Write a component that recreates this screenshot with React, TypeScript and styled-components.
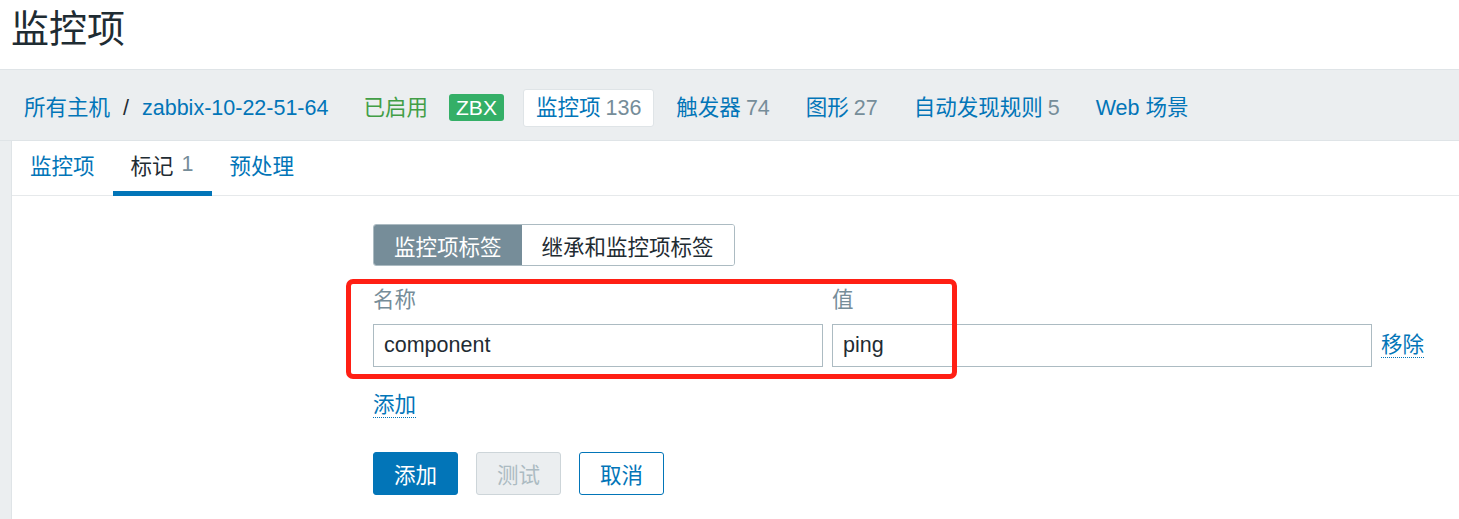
import React from "react";
import styled, { createGlobalStyle } from "styled-components";

const FONT = `"Liberation Sans", Arial, "Noto Sans CJK SC", sans-serif`;
const BLUE = "#0275b8";
const DARK = "#1f2c33";
const GREY = "#768d99";

const Global = createGlobalStyle`
  html, body, #root { height: 100%; }
  body {
    margin: 0;
    background: #ebeef0;
    font-family: ${FONT};
    font-size: 21.5px;
    color: ${DARK};
    overflow: hidden;
  }
  * { box-sizing: border-box; }
`;

const Page = styled.div`
  display: flex;
  flex-direction: column;
  height: 100vh;
`;

const Header = styled.header`
  height: 69px;
  background: #fff;
  padding: 0 11px;
`;

const Title = styled.h1`
  margin: 0;
  font-size: 38px;
  font-weight: normal;
  line-height: 59px;
  color: ${DARK};
`;

const Band = styled.nav`
  display: flex;
  align-items: center;
  height: 72px;
  padding: 18px 0 13px 24px;
  border-top: 1px solid #dfe4e7;
  border-bottom: 1px solid #dfe4e7;
  background: #ebeef0;
  line-height: 26px;
`;

const Crumb = styled.a`
  color: ${BLUE};
  text-decoration: none;
  white-space: nowrap;
`;

const Sep = styled.span`
  margin: 0 13px;
  color: ${DARK};
`;

const Status = styled.span`
  margin-left: 35px;
  color: #429e47;
`;

const Badge = styled.span`
  margin-left: 21px;
  height: 27px;
  width: 55px;
  display: inline-flex;
  align-items: center;
  justify-content: center;
  background: #34af67;
  color: #fff;
  border-radius: 3px;
  font-size: 21px;
`;

const NavItem = styled.a<{ $active?: boolean; $ml: number }>`
  display: inline-flex;
  align-items: center;
  height: 38px;
  padding: 0 12px;
  margin-left: ${(p) => p.$ml}px;
  color: ${BLUE};
  text-decoration: none;
  white-space: nowrap;
  border-radius: 3px;
  border: 1px solid ${(p) => (p.$active ? "#dfe4e7" : "transparent")};
  background: ${(p) => (p.$active ? "#fff" : "transparent")};
`;

const Count = styled.span<{ $gap?: number }>`
  color: ${GREY};
  margin-left: ${(p) => p.$gap ?? 5}px;
`;

const Panel = styled.main`
  flex: 1;
  margin-left: 11px;
  border-left: 1px solid #dfe4e7;
  background: #fff;
`;

const TabList = styled.div`
  display: flex;
  height: 55px;
  border-bottom: 1px solid #e6e9eb;
`;

const Tab = styled.a<{ $active?: boolean }>`
  display: flex;
  align-items: center;
  padding: 0 18px 3px;
  margin-bottom: -1px;
  color: ${(p) => (p.$active ? DARK : BLUE)};
  text-decoration: none;
  border-bottom: 5px solid ${(p) => (p.$active ? BLUE : "transparent")};
  white-space: nowrap;
`;

const Form = styled.div`
  margin-left: 361px;
  padding-top: 28px;
`;

const Toggle = styled.div`
  display: inline-flex;
  height: 42px;
  border: 1px solid #acbbc2;
  border-radius: 3px;
  overflow: hidden;
`;

const ToggleBtn = styled.span<{ $on?: boolean }>`
  display: flex;
  align-items: center;
  padding: 0 20px;
  background: ${(p) => (p.$on ? GREY : "#fff")};
  color: ${(p) => (p.$on ? "#fff" : DARK)};
  white-space: nowrap;
`;

const TagTable = styled.div`
  position: relative;
  display: grid;
  grid-template-columns: 450px 540px auto;
  column-gap: 9px;
  row-gap: 10px;
  margin-top: 20px;
  align-items: center;
`;

const ColLabel = styled.span`
  line-height: 28px;
  color: ${GREY};
`;

const Input = styled.div`
  height: 43px;
  display: flex;
  align-items: center;
  padding: 0 10px;
  border: 1px solid #acbbc2;
  background: #fff;
  color: ${DARK};
`;

const ActionLink = styled.a`
  justify-self: start;
  color: ${BLUE};
  text-decoration: none;
  line-height: 24px;
  border-bottom: 1px dotted ${BLUE};
`;

const AddLink = styled(ActionLink)`
  display: inline-block;
  margin-top: 26px;
`;

const Highlight = styled.div`
  position: absolute;
  left: -27px;
  top: -7px;
  width: 611px;
  height: 100px;
  border: 5px solid #ff1f14;
  border-radius: 7px;
  pointer-events: none;
`;

const Buttons = styled.div`
  display: flex;
  gap: 18px;
  margin-top: 34px;
`;

const Button = styled.button<{ $kind: "primary" | "disabled" | "outline" }>`
  width: 85px;
  height: 43px;
  border-radius: 3px;
  font-family: ${FONT};
  font-size: 21.5px;
  padding: 0;
  cursor: pointer;
  border: 1px solid ${(p) => (p.$kind === "disabled" ? "#cdd5d9" : BLUE)};
  background: ${(p) =>
    p.$kind === "primary" ? BLUE : p.$kind === "disabled" ? "#ebeef0" : "#fff"};
  color: ${(p) =>
    p.$kind === "primary" ? "#fff" : p.$kind === "disabled" ? "#acbbc2" : BLUE};
`;

export default function App() {
  return (
    <>
      <Global />
      <Page>
        <Header>
          <Title>监控项</Title>
        </Header>
        <Band>
          <Crumb>所有主机</Crumb>
          <Sep>/</Sep>
          <Crumb>zabbix-10-22-51-64</Crumb>
          <Status>已启用</Status>
          <Badge>ZBX</Badge>
          <NavItem $active $ml={19}>
            监控项<Count>136</Count>
          </NavItem>
          <NavItem $ml={9}>
            触发器<Count>74</Count>
          </NavItem>
          <NavItem $ml={10}>
            图形<Count>27</Count>
          </NavItem>
          <NavItem $ml={10}>
            自动发现规则<Count>5</Count>
          </NavItem>
          <NavItem $ml={10}>Web 场景</NavItem>
        </Band>
        <Panel>
          <TabList>
            <Tab>监控项</Tab>
            <Tab $active>
              标记<Count $gap={8}>1</Count>
            </Tab>
            <Tab>预处理</Tab>
          </TabList>
          <Form>
            <Toggle>
              <ToggleBtn $on>监控项标签</ToggleBtn>
              <ToggleBtn>继承和监控项标签</ToggleBtn>
            </Toggle>
            <TagTable>
              <ColLabel>名称</ColLabel>
              <ColLabel>值</ColLabel>
              <span />
              <Input>component</Input>
              <Input>ping</Input>
              <ActionLink>移除</ActionLink>
              <Highlight />
            </TagTable>
            <AddLink>添加</AddLink>
            <Buttons>
              <Button $kind="primary">添加</Button>
              <Button $kind="disabled">测试</Button>
              <Button $kind="outline">取消</Button>
            </Buttons>
          </Form>
        </Panel>
      </Page>
    </>
  );
}
